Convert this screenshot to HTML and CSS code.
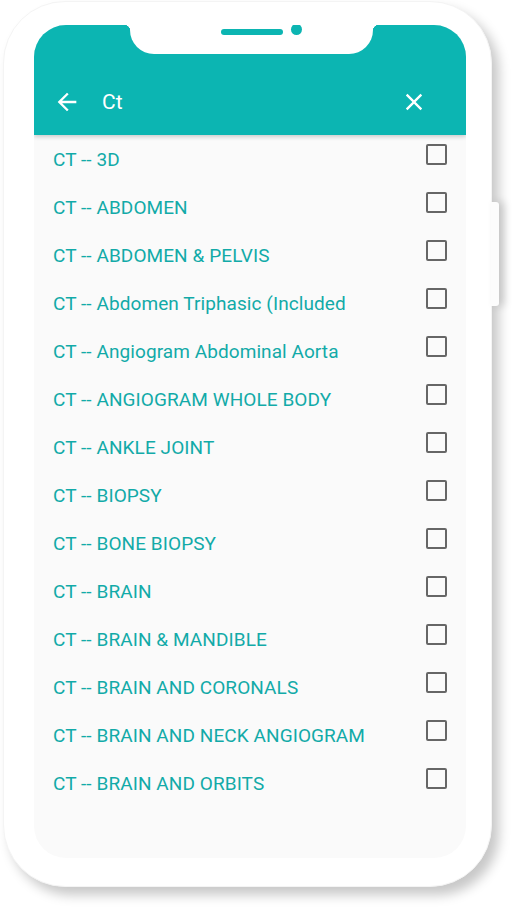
FILE: index.html
```html
<!DOCTYPE html>
<html>
<head>
<meta charset="utf-8">
<link rel="stylesheet" href="styles.css">
</head>
<body>
<div class="phone">
  <div class="side-btn"></div>
  <div class="screen">
    <div class="header">
      <div class="notch">
        <span class="speaker"></span>
        <span class="camera"></span>
      </div>
      <div class="toolbar">
        <svg class="back" width="28" height="28" viewBox="0 0 24 24"><path d="M20 11H7.83l5.59-5.59L12 4l-8 8 8 8 1.41-1.41L7.83 13H20v-2z" fill="#fff"/></svg>
        <span class="query">Ct</span>
        <svg class="close" width="28" height="28" viewBox="0 0 24 24"><path d="M19 6.41L17.59 5 12 10.59 6.41 5 5 6.41 10.59 12 5 17.59 6.41 19 12 13.41 17.59 19 19 17.59 13.41 12z" fill="#fff"/></svg>
      </div>
    </div>
    <ul class="list">
      <li class="row"><span class="label">CT -- 3D</span><span class="box"></span></li>
      <li class="row"><span class="label">CT -- ABDOMEN</span><span class="box"></span></li>
      <li class="row"><span class="label">CT -- ABDOMEN &amp; PELVIS</span><span class="box"></span></li>
      <li class="row"><span class="label">CT -- Abdomen Triphasic (Included</span><span class="box"></span></li>
      <li class="row"><span class="label">CT -- Angiogram Abdominal Aorta</span><span class="box"></span></li>
      <li class="row"><span class="label">CT -- ANGIOGRAM WHOLE BODY</span><span class="box"></span></li>
      <li class="row"><span class="label">CT -- ANKLE JOINT</span><span class="box"></span></li>
      <li class="row"><span class="label">CT -- BIOPSY</span><span class="box"></span></li>
      <li class="row"><span class="label">CT -- BONE BIOPSY</span><span class="box"></span></li>
      <li class="row"><span class="label">CT -- BRAIN</span><span class="box"></span></li>
      <li class="row"><span class="label">CT -- BRAIN &amp; MANDIBLE</span><span class="box"></span></li>
      <li class="row"><span class="label">CT -- BRAIN AND CORONALS</span><span class="box"></span></li>
      <li class="row"><span class="label">CT -- BRAIN AND NECK ANGIOGRAM</span><span class="box"></span></li>
      <li class="row"><span class="label">CT -- BRAIN AND ORBITS</span><span class="box"></span></li>
    </ul>
  </div>
</div>
</body>
</html>
```

FILE: styles.css
```css
html, body {
  margin: 0;
  padding: 0;
  background: #ffffff;
  width: 520px;
  height: 916px;
  overflow: hidden;
}
body {
  font-family: Roboto, "Noto Sans", sans-serif;
}
.phone {
  position: relative;
  box-sizing: border-box;
  margin: 1px 0 0 3px;
  width: 489px;
  height: 886px;
  background: #ffffff;
  border-radius: 62px;
  border: 1px solid #f4f4f4;
  box-shadow: 7px 8px 12px rgba(0, 0, 0, 0.22);
  padding: 23px 0 0 30px;
}
.side-btn {
  position: absolute;
  right: -8px;
  top: 200px;
  width: 8px;
  height: 104px;
  background: #fcfcfc;
  border-radius: 0 3px 3px 0;
  box-shadow: 5px 0 8px rgba(0, 0, 0, 0.18);
}
.screen {
  width: 432px;
  height: 833px;
  background: #fafafa;
  border-radius: 32px;
  overflow: hidden;
}
.header {
  position: relative;
  height: 110px;
  background: #0cb5b2;
  box-shadow: 0 2px 4px rgba(0, 0, 0, 0.18);
  z-index: 1;
}
.notch {
  position: absolute;
  left: 96px;
  top: 0;
  width: 243px;
  height: 29px;
  background: #ffffff;
  border-radius: 0 0 24px 24px;
}
.notch::before,
.notch::after {
  content: "";
  position: absolute;
  top: 0;
  width: 6px;
  height: 6px;
}
.notch::before {
  left: -6px;
  background: radial-gradient(circle at 0 100%, transparent 6px, #ffffff 6.5px);
}
.notch::after {
  right: -6px;
  background: radial-gradient(circle at 100% 100%, transparent 6px, #ffffff 6.5px);
}
.speaker {
  position: absolute;
  left: 91px;
  top: 4px;
  width: 62px;
  height: 6px;
  border-radius: 3px;
  background: #0cb5b2;
}
.camera {
  position: absolute;
  left: 161px;
  top: -1px;
  width: 11px;
  height: 11px;
  border-radius: 50%;
  background: #0cb5b2;
}
.toolbar {
  display: flex;
  align-items: center;
  height: 110px;
  padding: 44px 0 0 19px;
  box-sizing: border-box;
}
.back {
  display: block;
}
.query {
  margin-left: 21px;
  color: #ffffff;
  font-size: 21px;
  flex: 1;
}
.close {
  display: block;
  margin-right: 38px;
}
.list {
  list-style: none;
  margin: 0;
  padding: 1px 0 0 0;
}
.row {
  display: flex;
  align-items: flex-start;
  height: 48px;
  padding: 0 19px 0 19px;
}
.label {
  flex: 1;
  color: #12aaa8;
  font-size: 19px;
  letter-spacing: 0.08px;
  line-height: 48px;
  white-space: nowrap;
}
.box {
  box-sizing: border-box;
  margin-top: 8px;
  width: 21px;
  height: 21px;
  border: 2px solid #666666;
  border-radius: 2px;
}
```
